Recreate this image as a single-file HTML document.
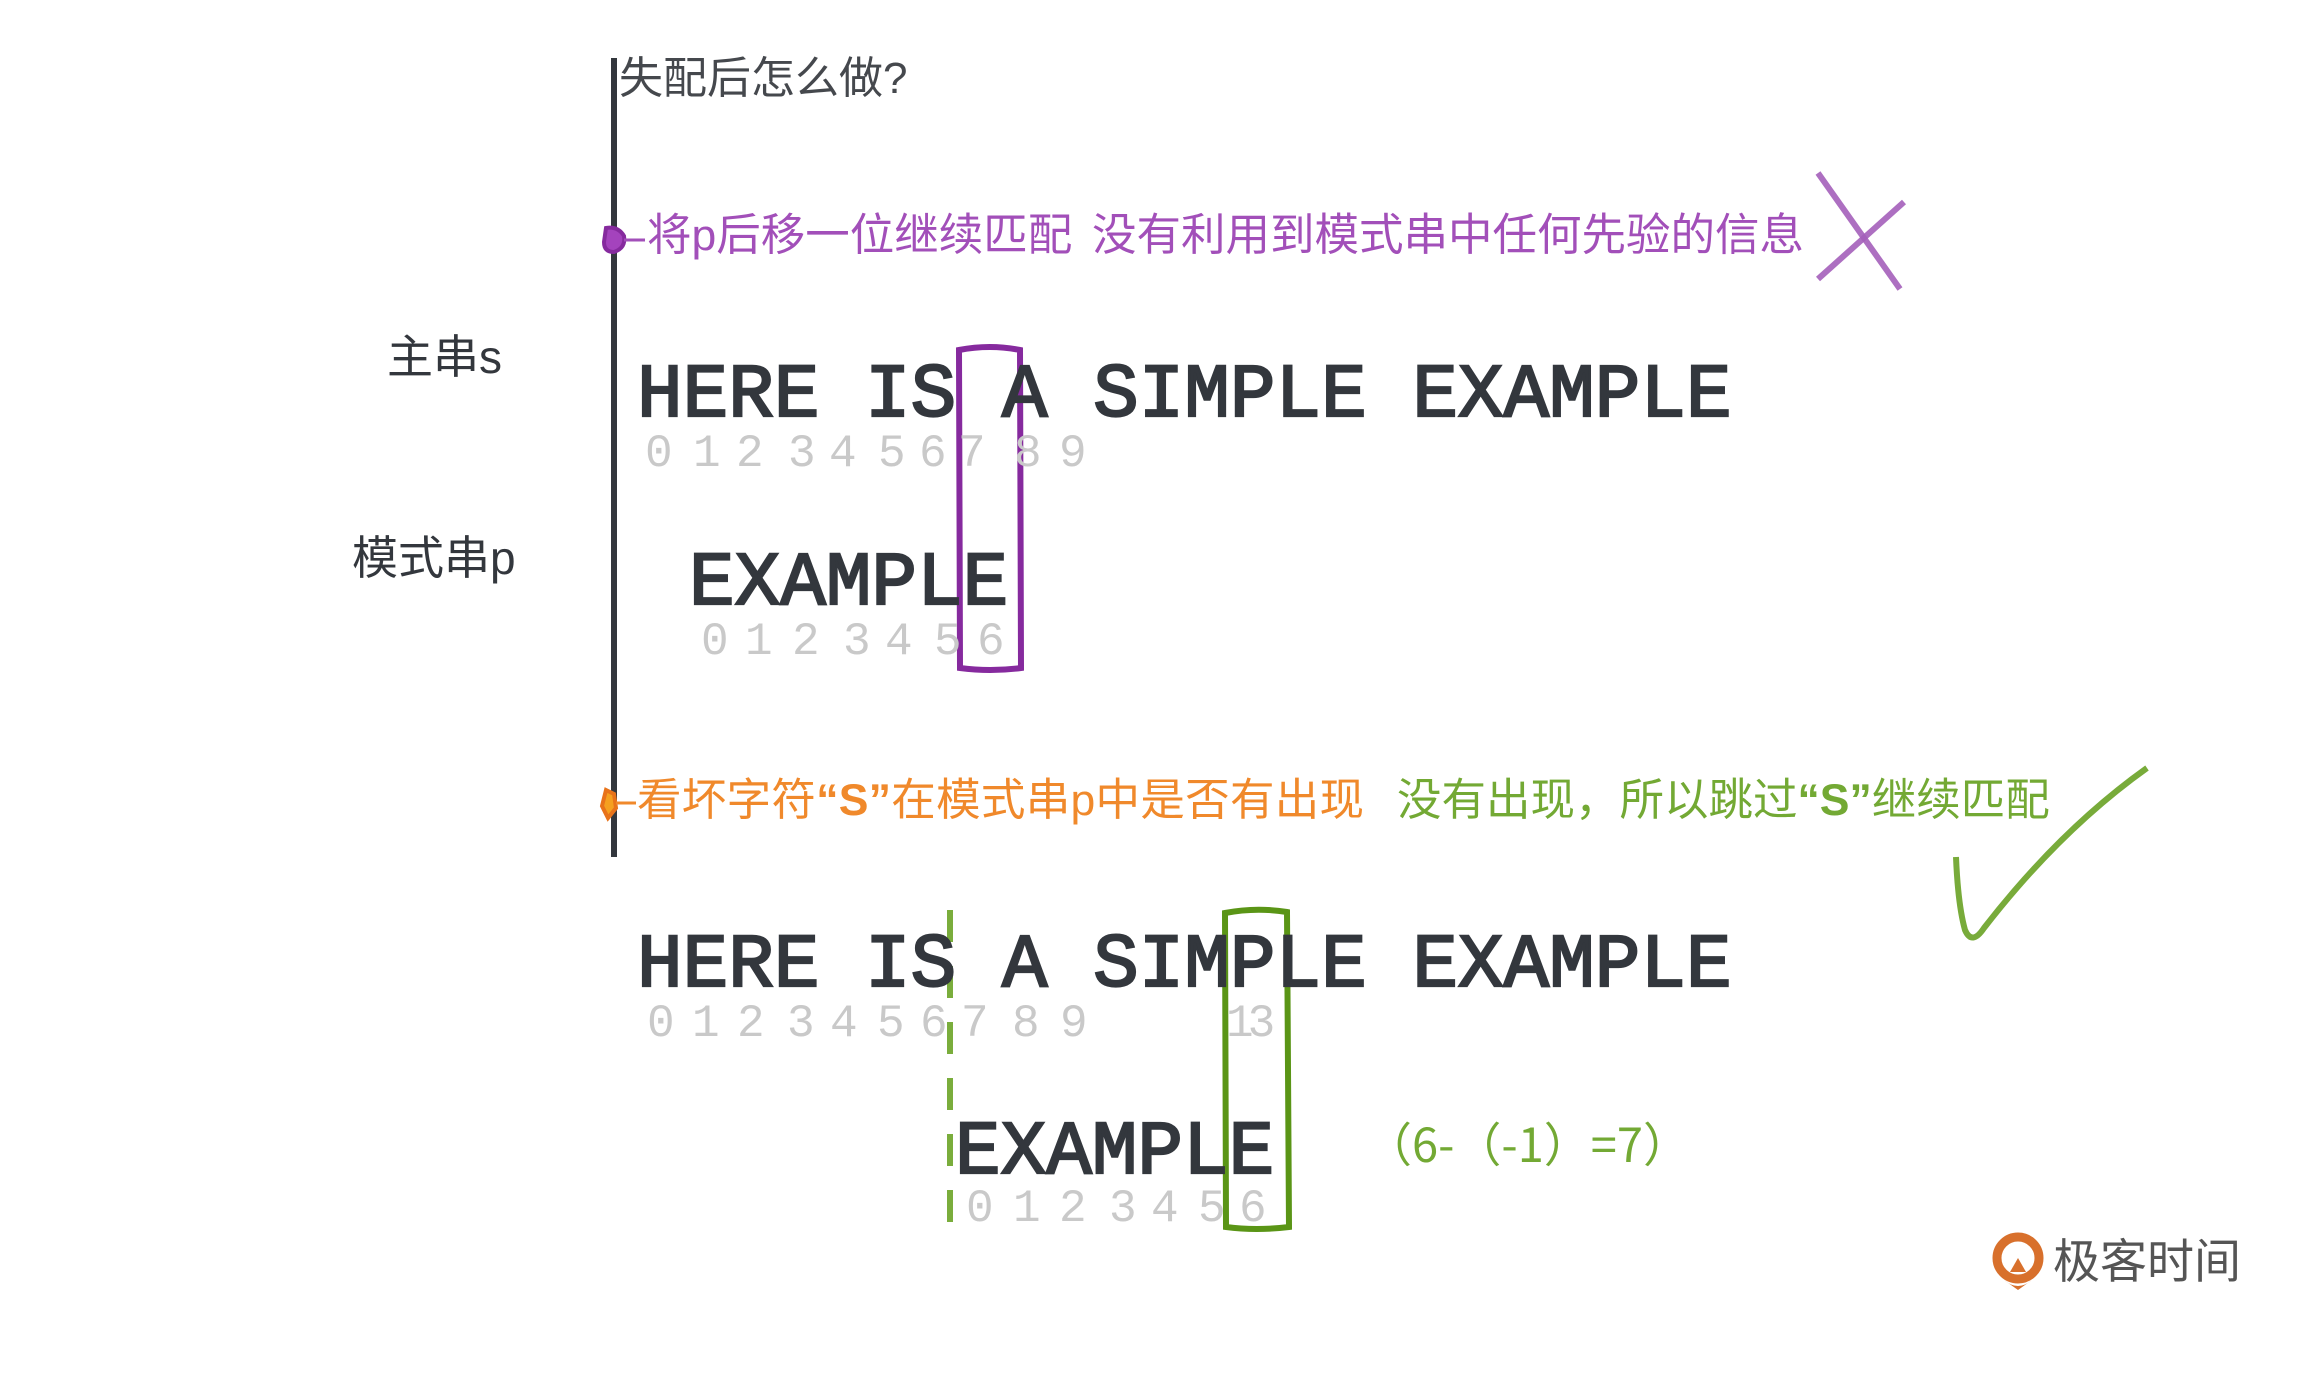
<!DOCTYPE html>
<html><head><meta charset="utf-8"><style>
html,body{margin:0;padding:0;background:#fff;}
body{width:2312px;height:1379px;position:relative;overflow:hidden;}
.a{position:absolute;white-space:nowrap;line-height:1;}
.cjk{font-family:"Liberation Sans","Noto Sans CJK SC",sans-serif;}
.m{font-family:"Liberation Mono",monospace;font-size:76px;font-weight:normal;color:#33373d;-webkit-text-stroke:2.2px #33373d;}
.d{font-family:"Liberation Mono",monospace;font-size:46px;color:#c9c9c9;}
svg{position:absolute;left:0;top:0;}
b{font-weight:bold;}
</style></head><body>
<svg width="2312" height="1379">
<line x1="614" y1="58" x2="614" y2="857" stroke="#33373d" stroke-width="6"/>
<path d="M606 228 Q618 226 624 236 Q626 248 614 252 Q604 252 604 242 Z" fill="#a443bd" stroke="#862a9e" stroke-width="4"/>
<line x1="624" y1="240" x2="645" y2="240" stroke="#a24fb9" stroke-width="3"/>
<path d="M606 790 L614 794 L616 808 L608 818 L602 806 Z" fill="#f5a020" stroke="#e8731a" stroke-width="4"/>
<line x1="616" y1="803" x2="636" y2="803" stroke="#f0892b" stroke-width="3"/>
<line x1="1818" y1="173" x2="1900" y2="289" stroke="#a560bb" stroke-width="6" opacity="0.9"/>
<line x1="1904" y1="202" x2="1818" y2="279" stroke="#a560bb" stroke-width="6" opacity="0.9"/>
<path d="M1956 857 Q1958 905 1965 930 Q1972 946 1984 928 Q2060 830 2147 768" fill="none" stroke="#78ab3a" stroke-width="6"/>
<path d="M959 350 Q990 344 1020 350 L1021 668 Q990 672 960 668 Z" fill="none" stroke="#862a9e" stroke-width="6"/>
<path d="M1225 913 Q1256 907 1287 912 L1289 1227 Q1256 1231 1226 1227 Z" fill="none" stroke="#5a9516" stroke-width="6"/>
<line x1="950" y1="910" x2="950" y2="1225" stroke="#7aad3c" stroke-width="6" stroke-dasharray="32 24"/>
<circle cx="2018" cy="1258" r="21" fill="none" stroke="#d8702c" stroke-width="9"/>
<path d="M2018 1258 L2010 1272 L2026 1272 Z" fill="#d8702c"/>
<path d="M2004 1280 Q2018 1292 2032 1280 L2018 1290 Z" fill="#d8702c"/>
</svg>

<div class="a cjk" style="left:619px;top:57px;font-size:44px;color:#45484d;">失配后怎么做?</div>
<div class="a cjk" style="left:647px;top:214px;font-size:44.5px;color:#a24fb9;">将p后移一位继续匹配</div>
<div class="a cjk" style="left:1092px;top:214px;font-size:44.5px;color:#a24fb9;">没有利用到模式串中任何先验的信息</div>
<div class="a cjk" style="left:387px;top:334px;font-size:46px;color:#33373d;">主串s</div>
<div class="a cjk" style="left:352px;top:535px;font-size:46px;color:#33373d;">模式串p</div>
<div class="a cjk" style="left:637px;top:779px;font-size:44.5px;color:#f0892b;letter-spacing:0.3px;">看坏字符<b>“S”</b>在模式串p中是否有出现</div>
<div class="a cjk" style="left:1397px;top:779px;font-size:44.5px;color:#73a934;">没有出现，所以跳过<b>“S”</b>继续匹配</div>
<div class="a" style="left:1365px;top:1118px;font-size:47px;color:#73a934;font-family:'Noto Sans CJK SC',sans-serif;">（6-（-1）=7）</div>
<div class="a cjk" style="left:2053px;top:1238px;font-size:47px;color:#555;">极客时间</div>

<div class="a m" style="left:637px;top:358px;">HERE IS A SIMPLE EXAMPLE</div>
<div class="a m" style="left:689px;top:546px;">EXAMPLE</div>
<div class="a m" style="left:637px;top:928px;">HERE IS A SIMPLE EXAMPLE</div>
<div class="a m" style="left:955px;top:1115px;">EXAMPLE</div>

<div class="a d" style="left:645px;top:431px;">0</div>
<div class="a d" style="left:693px;top:431px;">1</div>
<div class="a d" style="left:736px;top:431px;">2</div>
<div class="a d" style="left:788px;top:431px;">3</div>
<div class="a d" style="left:829px;top:431px;">4</div>
<div class="a d" style="left:878px;top:431px;">5</div>
<div class="a d" style="left:919px;top:431px;">6</div>
<div class="a d" style="left:958px;top:431px;">7</div>
<div class="a d" style="left:1014px;top:431px;">8</div>
<div class="a d" style="left:1059px;top:431px;">9</div>

<div class="a d" style="left:701px;top:619px;">0</div>
<div class="a d" style="left:745px;top:619px;">1</div>
<div class="a d" style="left:792px;top:619px;">2</div>
<div class="a d" style="left:843px;top:619px;">3</div>
<div class="a d" style="left:885px;top:619px;">4</div>
<div class="a d" style="left:934px;top:619px;">5</div>
<div class="a d" style="left:977px;top:619px;">6</div>

<div class="a d" style="left:647px;top:1001px;">0</div>
<div class="a d" style="left:692px;top:1001px;">1</div>
<div class="a d" style="left:737px;top:1001px;">2</div>
<div class="a d" style="left:787px;top:1001px;">3</div>
<div class="a d" style="left:830px;top:1001px;">4</div>
<div class="a d" style="left:877px;top:1001px;">5</div>
<div class="a d" style="left:920px;top:1001px;">6</div>
<div class="a d" style="left:961px;top:1001px;">7</div>
<div class="a d" style="left:1012px;top:1001px;">8</div>
<div class="a d" style="left:1060px;top:1001px;">9</div>
<div class="a d" style="left:1226px;top:1001px;letter-spacing:-6px;">13</div>

<div class="a d" style="left:966px;top:1186px;">0</div>
<div class="a d" style="left:1013px;top:1186px;">1</div>
<div class="a d" style="left:1059px;top:1186px;">2</div>
<div class="a d" style="left:1109px;top:1186px;">3</div>
<div class="a d" style="left:1151px;top:1186px;">4</div>
<div class="a d" style="left:1198px;top:1186px;">5</div>
<div class="a d" style="left:1239px;top:1186px;">6</div>
</body></html>
